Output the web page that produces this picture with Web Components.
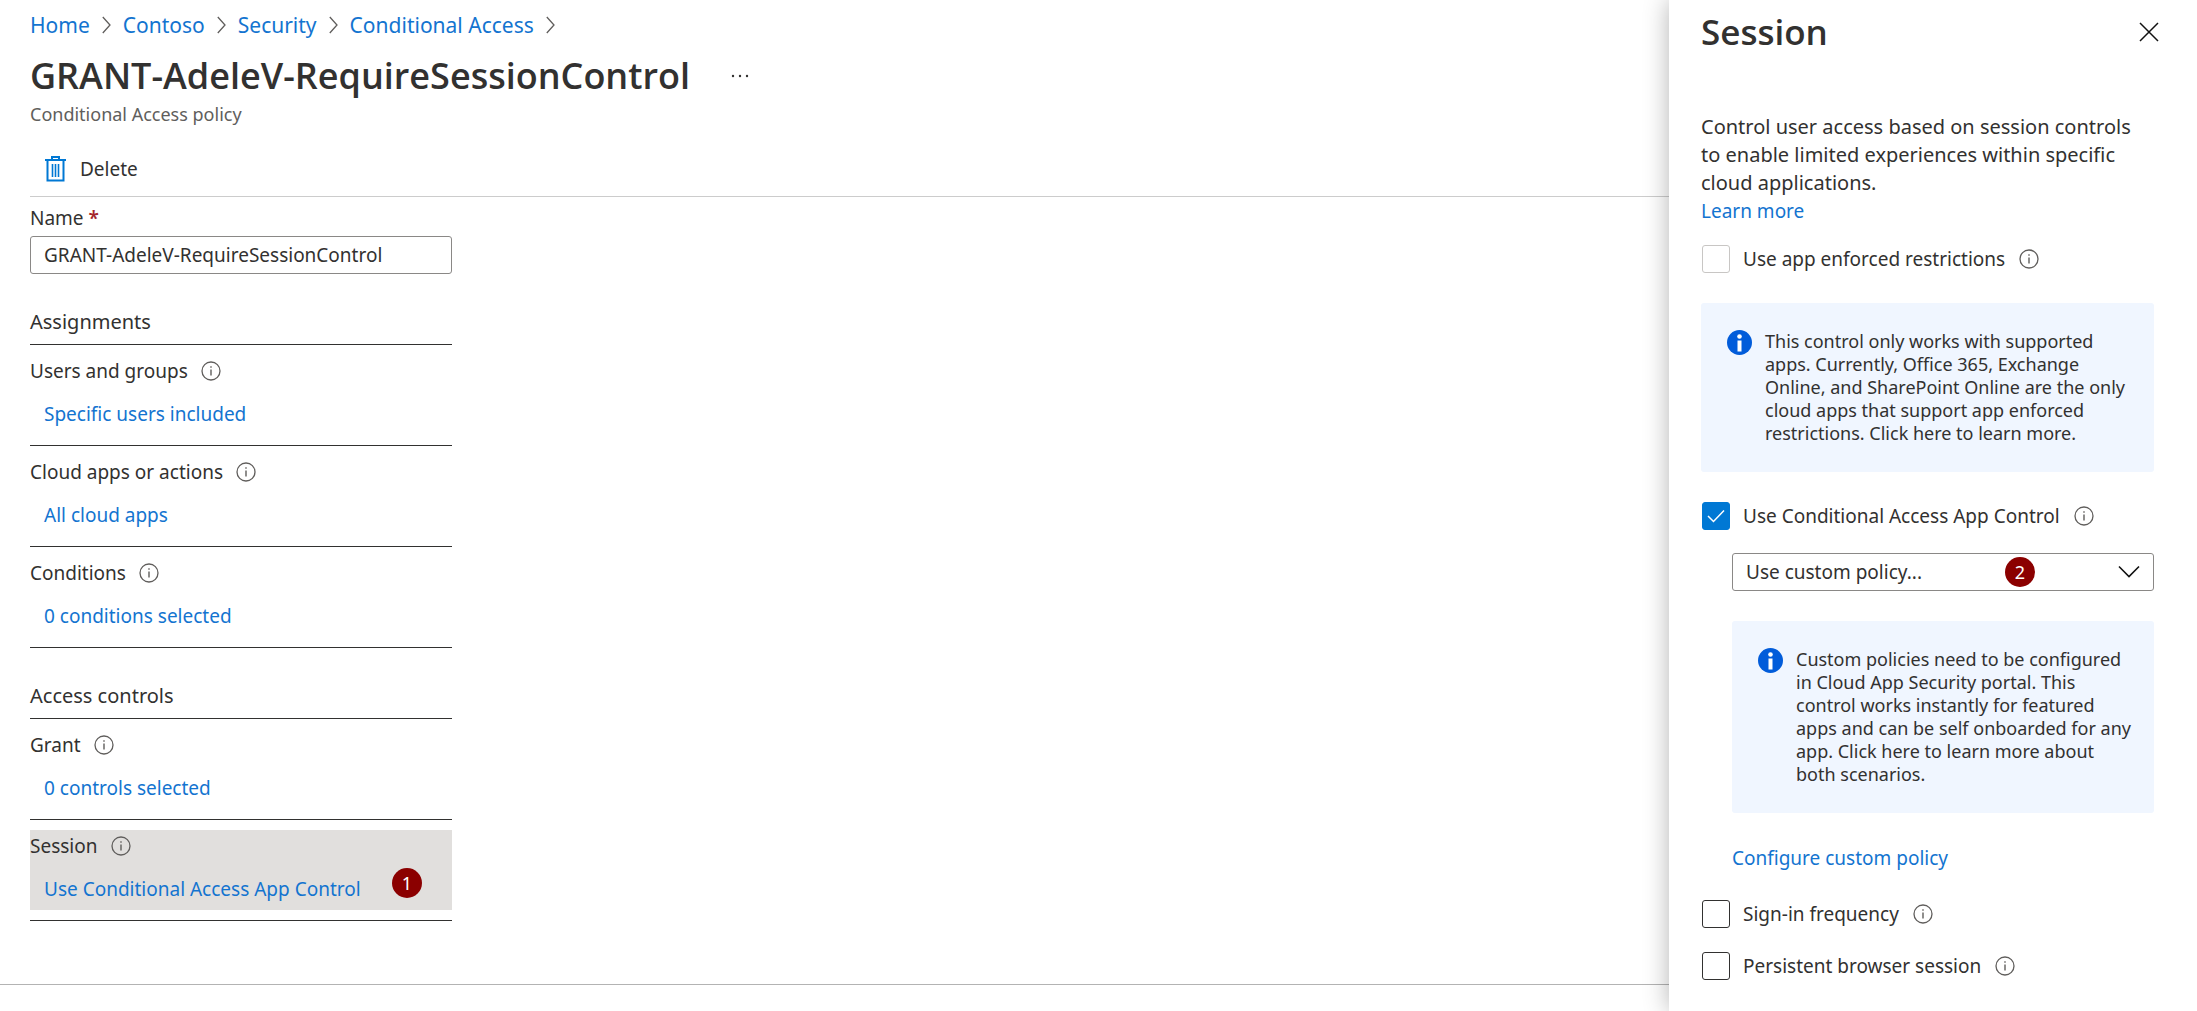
<!DOCTYPE html>
<html lang="en">
<head>
<meta charset="utf-8">
<title>GRANT-AdeleV-RequireSessionControl</title>
<style>
  body {
    margin: 0;
    font-family: "Noto Sans", "Open Sans", sans-serif;
    font-size: 19px;
    line-height: 30px;
    color: #323130;
    background: #fff;
    --title-font: "Open Sans", "Noto Sans", sans-serif;
    --link: #1374d0;
    --line: #323130;
  }
</style>
</head>
<body>
<policy-page>
  <bread-crumbs slot="crumbs" items="Home,Contoso,Security,Conditional Access"></bread-crumbs>
  <policy-header slot="header" heading="GRANT-AdeleV-RequireSessionControl">Conditional Access policy</policy-header>
  <command-bar slot="commands">Delete</command-bar>

  <name-field slot="form" value="GRANT-AdeleV-RequireSessionControl">Name</name-field>
  <policy-group slot="form" heading="Assignments">
    <policy-row label="Users and groups">Specific users included</policy-row>
    <policy-row label="Cloud apps or actions">All cloud apps</policy-row>
    <policy-row label="Conditions">0 conditions selected</policy-row>
  </policy-group>
  <policy-group slot="form" heading="Access controls">
    <policy-row label="Grant">0 controls selected</policy-row>
    <policy-row label="Session" selected step="1">Use Conditional Access App Control</policy-row>
  </policy-group>

  <session-panel slot="panel" heading="Session">
    <panel-intro>Control user access based on session controls to enable limited experiences within specific cloud applications.</panel-intro>
    <check-option disabled>Use app enforced restrictions</check-option>
    <info-box>This control only works with supported apps. Currently, Office 365, Exchange Online, and SharePoint Online are the only cloud apps that support app enforced restrictions. Click here to learn more.</info-box>
    <check-option checked>Use Conditional Access App Control</check-option>
    <policy-select step="2" value="Use custom policy..."></policy-select>
    <info-box nested>Custom policies need to be configured in Cloud App Security portal. This control works instantly for featured apps and can be self onboarded for any app. Click here to learn more about both scenarios.</info-box>
    <panel-link>Configure custom policy</panel-link>
    <check-option>Sign-in frequency</check-option>
    <check-option>Persistent browser session</check-option>
  </session-panel>
</policy-page>

<script>
const baseStyle = `
  :host, * { box-sizing: border-box; }
  a { color: var(--link); text-decoration: none; }
  a:hover { text-decoration: underline; }
  button { font: inherit; color: inherit; background: none; border: 0; padding: 0; cursor: pointer; }
  svg { display: block; }
`;

class BaseElement extends HTMLElement {
  constructor() {
    super();
    this.attachShadow({ mode: 'open' });
  }

  connectedCallback() {
    this.shadowRoot.innerHTML = `<style>${baseStyle}</style>${this.template()}`;
  }
}

class PolicyPage extends BaseElement {
  template() {
    return `
      <style>
        :host { display: flex; min-height: 100vh; overflow: hidden; }
        .main { flex: 1; min-width: 0; display: flex; flex-direction: column; }
        .content { flex: 1; padding: 10px 0 0 30px; }
        .form { max-width: 422px; padding-top: 6px; }
        footer { height: 27px; border-top: 1px solid #b3b3b3; }
      </style>
      <div class="main">
        <main class="content">
          <slot name="crumbs"></slot>
          <slot name="header"></slot>
          <slot name="commands"></slot>
          <div class="form"><slot name="form"></slot></div>
        </main>
        <footer></footer>
      </div>
      <slot name="panel"></slot>
    `;
  }
}

class BreadCrumbs extends BaseElement {
  template() {
    const items = this.getAttribute('items').split(',');
    return `
      <style>
        :host { display: block; font-size: 21px; }
        nav { display: flex; align-items: center; gap: 12px; }
      </style>
      <nav aria-label="Breadcrumb">
        ${items.map(item => `
          <a href="#">${item}</a>
          <svg width="9" height="18" viewBox="0 0 9 18" fill="none" stroke="#605e5c" stroke-width="1.3"><path d="M.8 1 8 9 .8 17"/></svg>
        `).join('')}
      </nav>
    `;
  }
}

class PolicyHeader extends BaseElement {
  template() {
    return `
      <style>
        :host { display: block; }
        .row { display: flex; align-items: center; gap: 41px; padding-top: 10px; }
        h1 { margin: 0; font-family: var(--title-font); font-size: 36px; line-height: 52px; font-weight: 600; }
        p { margin: 0; font-size: 18px; line-height: 24px; color: #605e5c; }
      </style>
      <div class="row">
        <h1>${this.getAttribute('heading')}</h1>
        <button aria-label="More">
          <svg width="18" height="4" viewBox="0 0 18 4" fill="#323130"><circle cx="2" cy="2" r="1.2"/><circle cx="9" cy="2" r="1.2"/><circle cx="16" cy="2" r="1.2"/></svg>
        </button>
      </div>
      <p><slot></slot></p>
    `;
  }
}

class CommandBar extends BaseElement {
  template() {
    return `
      <style>
        :host { display: block; padding: 28px 0 12px 15px; border-bottom: 1px solid #ccc; }
        button { display: flex; align-items: center; gap: 14px; }
      </style>
      <button>
        <svg width="21" height="26" viewBox="0 0 21 26" fill="none" stroke="#0078d4">
          <path stroke-width="2" d="M0 4h21M7 4V1h7v3M2.500 4v20.500h16V4"/>
          <path stroke-width="1.600" d="M7.500 8v13M10.500 8v13M13.500 8v13"/>
        </svg>
        <slot></slot>
      </button>
    `;
  }
}

class NameField extends BaseElement {
  template() {
    return `
      <style>
        :host { display: block; }
        label { display: block; }
        .required { color: #a4262c; font-weight: 600; line-height: 20px; }
        input {
          display: block; width: 100%; height: 38px; margin-top: 3px; padding: 0 13px;
          font: inherit; color: inherit; background: #fff;
          border: 1px solid #8a8886; border-radius: 3px;
        }
      </style>
      <label for="name"><slot></slot> <span class="required">*</span></label>
      <input id="name" type="text" value="${this.getAttribute('value')}">
    `;
  }
}

class InfoIcon extends BaseElement {
  template() {
    return `
      <style>:host { display: block; flex: none; }</style>
      <svg width="20" height="20" viewBox="0 0 20 20" fill="none" stroke="#605e5c">
        <circle cx="10" cy="10" r="9" stroke-width="1.300"/>
        <path stroke-width="1.400" d="M10 8.500v6M10 5.200v1.600"/>
      </svg>
    `;
  }
}

class StepBadge extends BaseElement {
  template() {
    return `
      <style>
        :host {
          display: block; width: 30px; height: 30px; border-radius: 50%;
          background: #8b0000; color: #fff; text-align: center; font-size: 18px; line-height: 30px;
        }
      </style>
      <slot></slot>
    `;
  }
}

class PolicyGroup extends BaseElement {
  template() {
    return `
      <style>
        :host { display: block; margin-top: 33px; }
        h2 { margin: 0; padding-bottom: 7px; font-size: 20px; font-weight: 400; border-bottom: 1px solid var(--line); }
      </style>
      <h2>${this.getAttribute('heading')}</h2>
      <slot></slot>
    `;
  }
}

class PolicyRow extends BaseElement {
  template() {
    const step = this.getAttribute('step');
    return `
      <style>
        :host { display: block; padding: 10px 0; border-bottom: 1px solid var(--line); }
        .block { position: relative; height: 80px; }
        :host([selected]) .block { background: #e1dfdd; }
        .label { display: flex; align-items: center; gap: 13px; line-height: 32px; }
        a { display: block; margin: 12px 0 0 14px; }
        step-badge { position: absolute; right: 30px; top: 38px; }
      </style>
      <div class="block">
        <div class="label"><span>${this.getAttribute('label')}</span><info-icon></info-icon></div>
        <a href="#"><slot></slot></a>
        ${step ? `<step-badge>${step}</step-badge>` : ''}
      </div>
    `;
  }
}

class SessionPanel extends BaseElement {
  template() {
    return `
      <style>
        :host { display: block; flex: 0 0 528px; padding: 10px 43px 0 32px; background: #fff; box-shadow: 0 0 24px rgba(0, 0, 0, .3); }
        header { display: flex; align-items: center; justify-content: space-between; margin-right: -5px; }
        h2 { margin: 0; font-family: var(--title-font); font-size: 35px; line-height: 44px; font-weight: 600; }
      </style>
      <header>
        <h2>${this.getAttribute('heading')}</h2>
        <button aria-label="Close">
          <svg width="20" height="20" viewBox="0 0 20 20" stroke="#111" stroke-width="1.500"><path d="M1 1l18 18M19 1 1 19"/></svg>
        </button>
      </header>
      <slot></slot>
    `;
  }
}

class PanelIntro extends BaseElement {
  template() {
    return `
      <style>
        :host { display: block; margin: 59px 0 19px; line-height: 28px; }
        p { margin: 0; font-size: 20px; }
      </style>
      <p><slot></slot></p>
      <a href="#">Learn more</a>
    `;
  }
}

class CheckOption extends BaseElement {
  template() {
    const checked = this.hasAttribute('checked') ? 'checked' : '';
    const disabled = this.hasAttribute('disabled') ? 'disabled' : '';
    return `
      <style>
        :host { display: flex; align-items: center; margin-bottom: 22px; }
        .box { display: grid; flex: none; margin: 0 13px 0 1px; }
        input, svg { grid-area: 1 / 1; }
        input { appearance: none; width: 28px; height: 28px; margin: 0; border: 1px solid #323130; border-radius: 3px; background: #fff; }
        input:disabled { border-color: #c8c6c4; }
        input:checked { background: #0078d4; border-color: #0078d4; }
        svg { place-self: center; pointer-events: none; visibility: hidden; }
        input:checked + svg { visibility: visible; }
        info-icon { margin-left: 14px; }
      </style>
      <span class="box">
        <input id="option" type="checkbox" ${checked} ${disabled}>
        <svg width="18" height="14" viewBox="0 0 18 14" fill="none" stroke="#fff" stroke-width="1.500"><path d="M1 7l5.500 5.500L17 1.500"/></svg>
      </span>
      <label for="option"><slot></slot></label>
      <info-icon></info-icon>
    `;
  }
}

class InfoBox extends BaseElement {
  template() {
    return `
      <style>
        :host { display: flex; gap: 13px; margin: 29px 0; padding: 27px 20px 27px 26px; background: #f0f6ff; border-radius: 3px; font-size: 18px; line-height: 23px; }
        :host([nested]) { margin: 30px 0 30px 31px; }
        svg { flex: none; }
        p { margin: 0; }
      </style>
      <svg width="25" height="25" viewBox="0 0 25 25">
        <circle cx="12.500" cy="12.500" r="12.500" fill="#015cda"/>
        <circle cx="12.500" cy="6.500" r="2.300" fill="#fff"/>
        <rect x="10.500" y="10.500" width="4" height="11" fill="#fff"/>
      </svg>
      <p><slot></slot></p>
    `;
  }
}

class PolicySelect extends BaseElement {
  template() {
    return `
      <style>
        :host { display: grid; position: relative; align-items: center; margin-left: 31px; }
        select, svg { grid-area: 1 / 1; }
        select {
          appearance: none; width: 100%; height: 38px; padding: 0 13px;
          font: inherit; color: inherit; background: #fff;
          border: 1px solid #8a8886; border-radius: 3px;
        }
        svg { justify-self: end; margin-right: 14px; pointer-events: none; }
        step-badge { position: absolute; right: 119px; top: 4px; }
      </style>
      <select aria-label="Conditional Access App Control policy">
        <option>${this.getAttribute('value')}</option>
      </select>
      <svg width="22" height="14" viewBox="0 0 22 14" fill="none" stroke="#111" stroke-width="1.600"><path d="M1 1.500l10 10 10-10"/></svg>
      <step-badge>${this.getAttribute('step')}</step-badge>
    `;
  }
}

class PanelLink extends BaseElement {
  template() {
    return `
      <style>:host { display: block; margin: 0 0 26px 31px; }</style>
      <a href="#"><slot></slot></a>
    `;
  }
}

customElements.define('policy-page', PolicyPage);
customElements.define('bread-crumbs', BreadCrumbs);
customElements.define('policy-header', PolicyHeader);
customElements.define('command-bar', CommandBar);
customElements.define('name-field', NameField);
customElements.define('info-icon', InfoIcon);
customElements.define('step-badge', StepBadge);
customElements.define('policy-group', PolicyGroup);
customElements.define('policy-row', PolicyRow);
customElements.define('session-panel', SessionPanel);
customElements.define('panel-intro', PanelIntro);
customElements.define('check-option', CheckOption);
customElements.define('info-box', InfoBox);
customElements.define('policy-select', PolicySelect);
customElements.define('panel-link', PanelLink);
</script>
</body>
</html>
